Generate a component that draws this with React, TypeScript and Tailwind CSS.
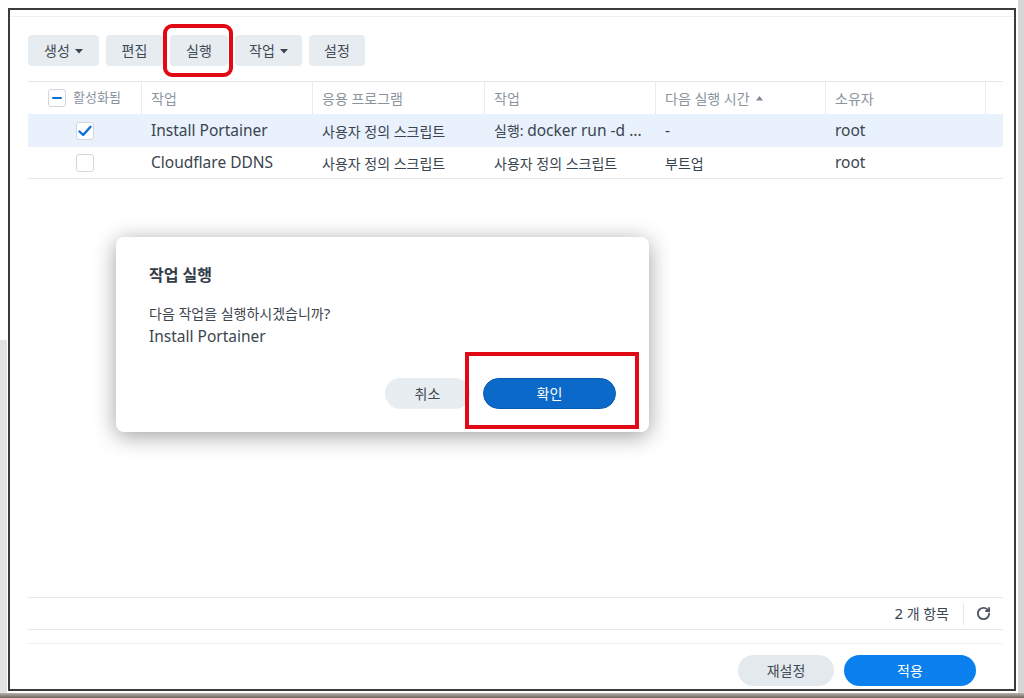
import React from "react";
import { RotateCw } from "lucide-react";

// Hangul runs sit at the base size; Latin runs are set a little larger so both read at the same weight.
const Mixed = ({ text, latin = "text-[15.5px]", hangul = "text-[14px]" }: { text: string; latin?: string; hangul?: string }) => {
  const parts = text.match(/[\uAC00-\uD7A3\u3131-\u318E: ]+|[^\uAC00-\uD7A3\u3131-\u318E: ]+/g) || [];
  return (
    <span>
      {parts.map((p, i) => (
        <span key={i} className={/[\uAC00-\uD7A3]/.test(p) ? hangul : latin}>
          {p}
        </span>
      ))}
    </span>
  );
};

const Caret = () => (
  <svg width="8" height="5" viewBox="0 0 8 5" className="ml-[5px] mt-[1px]">
    <path d="M0 0 L8 0 L4 4.5 Z" fill="#3c4650" />
  </svg>
);

const ToolButton = ({ label, width, caret }: { label: string; width: string; caret?: boolean }) => (
  <div
    className={`${width} h-[31px] flex items-center justify-center rounded-[4px] bg-[#e7ecf1] text-[14px] text-[#3f4953]`}
  >
    <span>{label}</span>
    {caret && <Caret />}
  </div>
);

const Checkbox = ({ checked }: { checked?: boolean }) => (
  <div className="w-[18px] h-[18px] rounded-[3px] border border-[#cfd6dd] bg-white flex items-center justify-center">
    {checked && (
      <svg width="14" height="12" viewBox="0 0 14 12">
        <path d="M1.5 6.5 L5.2 10 L12.5 1.8" fill="none" stroke="#0f6fd8" strokeWidth="2.4" strokeLinecap="round" strokeLinejoin="round" />
      </svg>
    )}
  </div>
);

const cols = ["w-[114px]", "w-[171px]", "w-[172px]", "w-[171px]", "w-[170px]", "w-[160px]"];

type Row = { checked: boolean; cells: string[]; selected?: boolean };

const rows: Row[] = [
  {
    checked: true,
    selected: true,
    cells: ["Install Portainer", "사용자 정의 스크립트", "실행: docker run -d ...", "-", "root"],
  },
  {
    checked: false,
    cells: ["Cloudflare DDNS", "사용자 정의 스크립트", "사용자 정의 스크립트", "부트업", "root"],
  },
];

export default function App() {
  return (
    <div className="relative w-[1024px] h-[698px] overflow-hidden bg-white font-[family-name:'Noto_Sans','Noto_Sans_CJK_KR',sans-serif]">
      {/* backdrop strips around the window */}
      <div className="absolute left-0 top-[340px] w-[7px] h-[360px] bg-[#e2e2e2]" />
      <div className="absolute right-0 top-0 w-[6px] h-[698px] bg-[#d6d6d6]" />
      <div className="absolute left-0 bottom-0 w-[1024px] h-[5px] bg-gradient-to-b from-[#b9b4ae] to-[#6e645c]" />

      <div className="absolute left-[8px] top-[8px] w-[1008px] h-[683px] border-2 border-[#3b3b3b] bg-white flex flex-col">
        <div className="h-[7px] border-b border-[#eef0f2] shrink-0" />

        <div className="flex-1 flex flex-col pl-[18px] pr-[11px]">
          {/* toolbar */}
          <div className="flex gap-[7px] mt-[18px]">
            <ToolButton label="생성" width="w-[71px]" caret />
            <ToolButton label="편집" width="w-[57px]" />
            <ToolButton label="실행" width="w-[58px]" />
            <ToolButton label="작업" width="w-[67px]" caret />
            <ToolButton label="설정" width="w-[56px]" />
          </div>

          {/* table */}
          <div className="mt-[15px] border-t border-[#e3e8ee]">
            <div className="flex h-[32px] text-[14px] text-[#8a949e]">
              <div className={`${cols[0]} flex items-center justify-center gap-[7px] border-r border-[#e9edf1]`}>
                <div className="w-[18px] h-[18px] rounded-[3px] border border-[#cfd6dd] bg-white flex items-center justify-center">
                  <div className="w-[10px] h-[2px] bg-[#0f6fd8] rounded-[1px]" />
                </div>
                <span className="text-[13px]">활성화됨</span>
              </div>
              <div className={`${cols[1]} flex items-center pl-[9px] border-r border-[#e9edf1]`}>작업</div>
              <div className={`${cols[2]} flex items-center pl-[9px] border-r border-[#e9edf1]`}>응용 프로그램</div>
              <div className={`${cols[3]} flex items-center pl-[9px] border-r border-[#e9edf1]`}>작업</div>
              <div className={`${cols[4]} flex items-center pl-[9px] border-r border-[#e9edf1]`}>
                다음 실행 시간
                <svg width="7" height="5" viewBox="0 0 7 5" className="ml-[6px]">
                  <path d="M0 4.5 L7 4.5 L3.5 0 Z" fill="#7d8791" />
                </svg>
              </div>
              <div className={`${cols[5]} flex items-center pl-[9px] border-r border-[#e9edf1]`}>소유자</div>
              <div className="flex-1" />
            </div>

            {rows.map((r, i) => (
              <div
                key={i}
                className={`flex text-[#3a444e] ${i === 0 ? "h-[33px]" : "h-[32px] border-b"} border-[#e3e8ee] ${
                  r.selected ? "bg-[#e8f1fc]" : ""
                }`}
              >
                <div className={`${cols[0]} flex items-center justify-center`}>
                  <Checkbox checked={r.checked} />
                </div>
                {r.cells.map((c, j) => (
                  <div key={j} className={`${cols[j + 1]} flex items-center pl-[9px] whitespace-pre`}>
                    <Mixed text={c} />
                  </div>
                ))}
              </div>
            ))}
          </div>

          <div className="flex-1" />

          {/* status bar */}
          <div className="border-t border-[#e3e8ee] h-[32px] flex items-center justify-end text-[14px] text-[#3c4650]">
            <span className="mr-[14px]">
              <span className="text-[15px]">2</span> 개 항목
            </span>
            <div className="w-px h-[22px] bg-[#e3e8ee]" />
            <div className="w-[39px] flex items-center justify-center">
              <RotateCw size={15} strokeWidth={3} color="#4f5963" />
            </div>
          </div>
          <div className="border-t border-[#e3e8ee]" />
          <div className="mt-[13px] border-t border-[#eef1f4]" />

          {/* footer buttons */}
          <div className="flex justify-end gap-[10px] mt-[11px] mb-[3px] pr-[27px]">
            <div className="w-[96px] h-[31px] rounded-full bg-[#e4e9ee] flex items-center justify-center text-[14px] text-[#3f4953]">
              재설정
            </div>
            <div className="w-[132px] h-[31px] rounded-full bg-[#0a80ee] flex items-center justify-center text-[14px] text-white">
              적용
            </div>
          </div>
        </div>
      </div>

      {/* highlight around the run button */}
      <div className="absolute left-[163px] top-[24px] w-[70px] h-[53px] rounded-[9px] border-[4px] border-[#e10a14]" />

      {/* confirmation dialog */}
      <div className="absolute left-[116px] top-[237px] w-[533px] h-[195px] rounded-[8px] bg-white shadow-[0_4px_22px_rgba(0,0,0,0.38)] flex flex-col px-[33px]">
        <div className="mt-[26px] text-[16px] font-bold text-[#333c45]">작업 실행</div>
        <div className="mt-[15px] leading-[23px] text-[#3c4650]">
          <div className="text-[14px]">
            다음 작업을 실행하시겠습니까<span className="text-[15px]">?</span>
          </div>
          <div className="text-[15.5px]">Install Portainer</div>
        </div>
        <div className="flex justify-end gap-[13px] mt-[30px]">
          <div className="w-[85px] h-[31px] rounded-full bg-[#e8edf2] flex items-center justify-center text-[14px] text-[#3f4953]">
            취소
          </div>
          <div className="w-[133px] h-[31px] rounded-full bg-[#0b69c9] border border-[#0a5bb0] flex items-center justify-center text-[14px] text-white">
            확인
          </div>
        </div>
      </div>

      {/* highlight around the confirm button */}
      <div className="absolute left-[465px] top-[352px] w-[174px] h-[77px] border-[4px] border-[#e10a14]" />
    </div>
  );
}
